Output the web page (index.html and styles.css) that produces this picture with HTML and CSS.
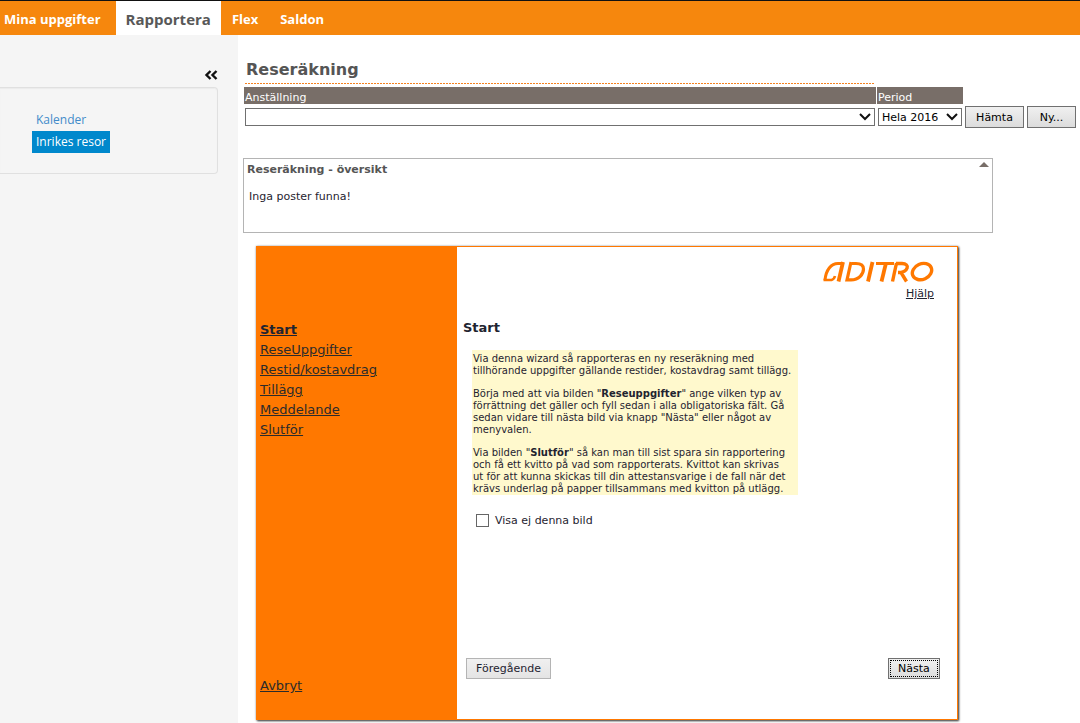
FILE: index.html
```html
<!DOCTYPE html>
<html lang="sv">
<head>
<meta charset="utf-8">
<title>Reseräkning</title>
<meta name="viewport" content="width=device-width, initial-scale=1">
<link rel="stylesheet" href="styles.css">
</head>
<body>
<nav class="topbar">
  <a class="tab" href="#uppgifter">Mina uppgifter</a>
  <a class="tab tab-active" href="#rapportera">Rapportera</a>
  <a class="tab" href="#flex">Flex</a>
  <a class="tab" href="#saldon">Saldon</a>
</nav>
<div class="page">
  <aside class="sidebar">
    <button class="collapse" type="button" aria-label="Dölj meny">
      <svg width="14" height="10" viewBox="0 0 14 10" fill="none" stroke="#111" stroke-width="2.400"><path d="M6.500 1L2.500 5L6.500 9M12.500 1L8.500 5L12.500 9"/></svg>
    </button>
    <nav class="submenu">
      <a class="subitem" href="#kalender">Kalender</a>
      <a class="subitem subitem-active" href="#inrikes">Inrikes resor</a>
    </nav>
  </aside>
  <main class="content">
    <h1 class="title">Reseräkning</h1>
    <form class="filter">
      <div class="field field-wide">
        <label class="label" for="anst">Anställning</label>
        <div class="control"><select class="select" id="anst"><option></option></select></div>
      </div>
      <div class="field field-period">
        <label class="label" for="period">Period</label>
        <div class="control"><select class="select" id="period"><option>Hela 2016</option></select></div>
      </div>
      <button class="button button-fetch" type="button">Hämta</button>
      <button class="button button-new" type="button">Ny...</button>
    </form>
    <section class="overview">
      <div class="overview-head">
        <h2 class="overview-title">Reseräkning - översikt</h2>
        <svg class="fold" width="10" height="5" viewBox="0 0 10 5"><path d="M0 5L5 0L10 5Z" fill="#786e68"/></svg>
      </div>
      <p class="overview-text">Inga poster funna!</p>
    </section>
    <section class="wizard">
      <nav class="steps">
        <div class="step-list">
          <a class="step step-current" href="#start">Start</a>
          <a class="step" href="#rese">ReseUppgifter</a>
          <a class="step" href="#restid">Restid/kostavdrag</a>
          <a class="step" href="#tillagg">Tillägg</a>
          <a class="step" href="#meddelande">Meddelande</a>
          <a class="step" href="#slutfor">Slutför</a>
        </div>
        <a class="step" href="#avbryt">Avbryt</a>
      </nav>
      <div class="panel">
        <div class="brand">
          <svg class="logo" role="img" aria-label="Aditro" width="111" height="22" viewBox="0 0 111 22" fill="none" stroke="#ff7800" stroke-width="3.400">
            <path d="M0.500 19H8.500Q11 18.500 12 15" stroke-width="2.600"/>
            <path d="M2 19C3 9 8 2.500 15 2.500H20" stroke-width="3"/>
            <path d="M20 1L15.500 20.500" stroke-width="3.800"/>
            <path d="M28 1L24 18.800H28C36 18.800 40.500 13 40.500 8C40.500 4 37.500 2.500 33 2.500H29" stroke-width="3.200"/>
            <path d="M49.500 1L45 20.500" stroke-width="3.800"/>
            <path d="M53 2.500H71" stroke-width="3"/>
            <path d="M63 2L58.500 20.500" stroke-width="3.800"/>
            <path d="M73.500 2L69.500 20.500"/>
            <path d="M73 2.500H79C87.500 2.500 85.500 11.500 75 11.500M78 11.500L83.500 20.500"/>
            <ellipse cx="99" cy="10.600" rx="10" ry="7.800" transform="rotate(-24 99 10.600)"/>
          </svg>
          <a class="help" href="#help">Hjälp</a>
        </div>
        <h2 class="panel-title">Start</h2>
        <div class="note">
          <p class="note-text">Via denna wizard så rapporteras en ny reseräkning med<br>tillhörande uppgifter gällande restider, kostavdrag samt tillägg.</p>
          <p class="note-text">Börja med att via bilden "<b>Reseuppgifter</b>" ange vilken typ av<br>förrättning det gäller och fyll sedan i alla obligatoriska fält. Gå<br>sedan vidare till nästa bild via knapp "Nästa" eller något av<br>menyvalen.</p>
          <p class="note-text">Via bilden "<b>Slutför</b>" så kan man till sist spara sin rapportering<br>och få ett kvitto på vad som rapporterats. Kvittot kan skrivas<br>ut för att kunna skickas till din attestansvarige i de fall när det<br>krävs underlag på papper tillsammans med kvitton på utlägg.</p>
        </div>
        <label class="check"><input class="checkbox" type="checkbox">Visa ej denna bild</label>
        <div class="actions">
          <button class="button button-prev" type="button">Föregående</button>
          <button class="button button-next" type="button"><span class="focus">Nästa</span></button>
        </div>
      </div>
    </section>
  </main>
</div>
</body>
</html>
```
FILE: styles.css
```css
* { box-sizing: border-box; }
body {
  margin: 0;
  min-height: 100vh;
  display: flex;
  flex-direction: column;
  background: #fff;
  color: #1f2430;
  font: 11px/13px Verdana, "DejaVu Sans", sans-serif;
}
h1, h2, p { margin: 0; }
.topbar {
  display: flex;
  height: 35px;
  border-top: 1px solid #111;
  background: #f6870d;
}
.tab {
  padding: 0 11px;
  color: #fff;
  font: bold 13px/36px "Open Sans", sans-serif;
  text-decoration: none;
}
.tab:first-child { padding: 0 15px 0 4px; }
.tab-active {
  padding: 0 10px;
  background: #fff;
  color: #585858;
  font-size: 15px;
}
.page { display: flex; flex: 1; }
.sidebar {
  flex: 0 0 238px;
  padding: 35px 20px 0 0;
  background: #f5f5f5;
}
.collapse {
  display: block;
  margin: 0 0 7px auto;
  padding: 0;
  border: 0;
  background: none;
  line-height: 0;
}
.submenu {
  display: flex;
  flex-direction: column;
  align-items: flex-start;
  height: 87px;
  padding: 21px 0 0 32px;
  border: 1px solid #e0e0e0;
  border-left: 0;
  border-radius: 0 4px 4px 0;
  box-shadow: inset 0 1px 1px #ececec;
}
.subitem {
  padding: 0 4px;
  color: #428bca;
  font: 12px/22px "Open Sans", sans-serif;
  text-decoration: none;
}
.subitem-active { background: #0088cc; color: #fff; }
.content { flex: 1; min-width: 0; padding: 24px 3px 0 6px; }
.title {
  width: 630px;
  max-width: 100%;
  height: 25px;
  margin-left: 1px;
  padding: 0 1px;
  background: repeating-linear-gradient(90deg, #f58220 0 2px, #fff 2px 3px) bottom / 100% 1px no-repeat;
  color: #555;
  font-size: 16px;
  line-height: 21px;
}
.filter { display: flex; align-items: flex-end; padding-top: 3px; }
.field-wide { flex: 0 1 632px; margin-right: 1px; }
.field-period { flex: 0 0 86px; margin-right: 2px; }
.label {
  display: block;
  height: 17px;
  padding-left: 1px;
  background: #786e68;
  color: #fff;
  line-height: 21px;
}
.control { padding: 4px 1px 2px; }
.select {
  display: block;
  width: 100%;
  height: 18px;
  padding: 0 18px 0 3px;
  border: 1px solid #707070;
  border-radius: 0;
  appearance: none;
  background: #fff url("data:image/svg+xml,%3Csvg xmlns='http://www.w3.org/2000/svg' width='12' height='8' fill='none' stroke='%23111' stroke-width='2'%3E%3Cpath d='M1 1L6 6L11 1'/%3E%3C/svg%3E") no-repeat right 3px center;
  color: #000;
  font: inherit;
}
.button {
  padding: 0;
  border: 1px solid #707070;
  background: linear-gradient(#f0f0f0, #dcdcdc);
  color: #000;
  font: inherit;
}
.button-fetch { width: 59px; height: 22px; margin-right: 3px; }
.button-new { width: 49px; height: 22px; }
.overview {
  width: 750px;
  max-width: 100%;
  min-height: 75px;
  margin: 30px 0 0 -1px;
  padding: 3px;
  border: 1px solid #b4b4b4;
}
.overview-head { display: flex; justify-content: space-between; }
.overview-title { color: #555; font-size: 11px; line-height: 15px; }
.overview-text { padding: 13px 2px 0; }
.wizard {
  display: flex;
  width: 702px;
  max-width: 100%;
  min-height: 474px;
  margin: 13px 0 0 12px;
  border: 1px solid #ff7800;
  box-shadow: 1px 1px 2px #333, 0 0 2px #bbb;
}
.steps {
  flex: 0 0 200px;
  display: flex;
  flex-direction: column;
  align-items: flex-start;
  justify-content: space-between;
  padding: 73px 3px 23px;
  background: #ff7800;
}
.step-list { display: flex; flex-direction: column; align-items: flex-start; }
.step { color: #2b2b2b; font-size: 13px; line-height: 20px; }
.step-current { color: #1f2430; font-weight: bold; }
.panel {
  flex: 1;
  display: flex;
  flex-direction: column;
  padding: 14px 17px 40px 6px;
}
.brand { display: flex; flex-direction: column; align-items: flex-end; padding-right: 6px; }
.logo { display: block; }
.help { margin-top: 4px; color: #1f2430; }
.panel-title { margin-top: 20px; font-size: 13px; line-height: 16px; }
.note {
  display: flex;
  flex-direction: column;
  gap: 11px;
  width: 326px;
  margin: 14px 0 0 9px;
  padding: 3px 0 0 1px;
  background: #fff9cd;
  font-size: 10px;
  line-height: 12px;
  white-space: nowrap;
}
.check { display: flex; align-items: center; margin: 19px 0 0 13px; }
.checkbox {
  width: 13px;
  height: 13px;
  margin: 0 6px 0 0;
  border: 1px solid #666;
  appearance: none;
  background: #fff;
}
.actions { display: flex; justify-content: space-between; margin-top: auto; padding-left: 3px; }
.button-prev { width: 85px; height: 21px; border-color: #b4b4b4; color: #1f2430; background: linear-gradient(#f0f0f0, #e4e4e4); }
.button-next { width: 52px; height: 21px; padding: 1px; }
.focus { display: block; border: 1px dotted #000; line-height: 15px; }
```
